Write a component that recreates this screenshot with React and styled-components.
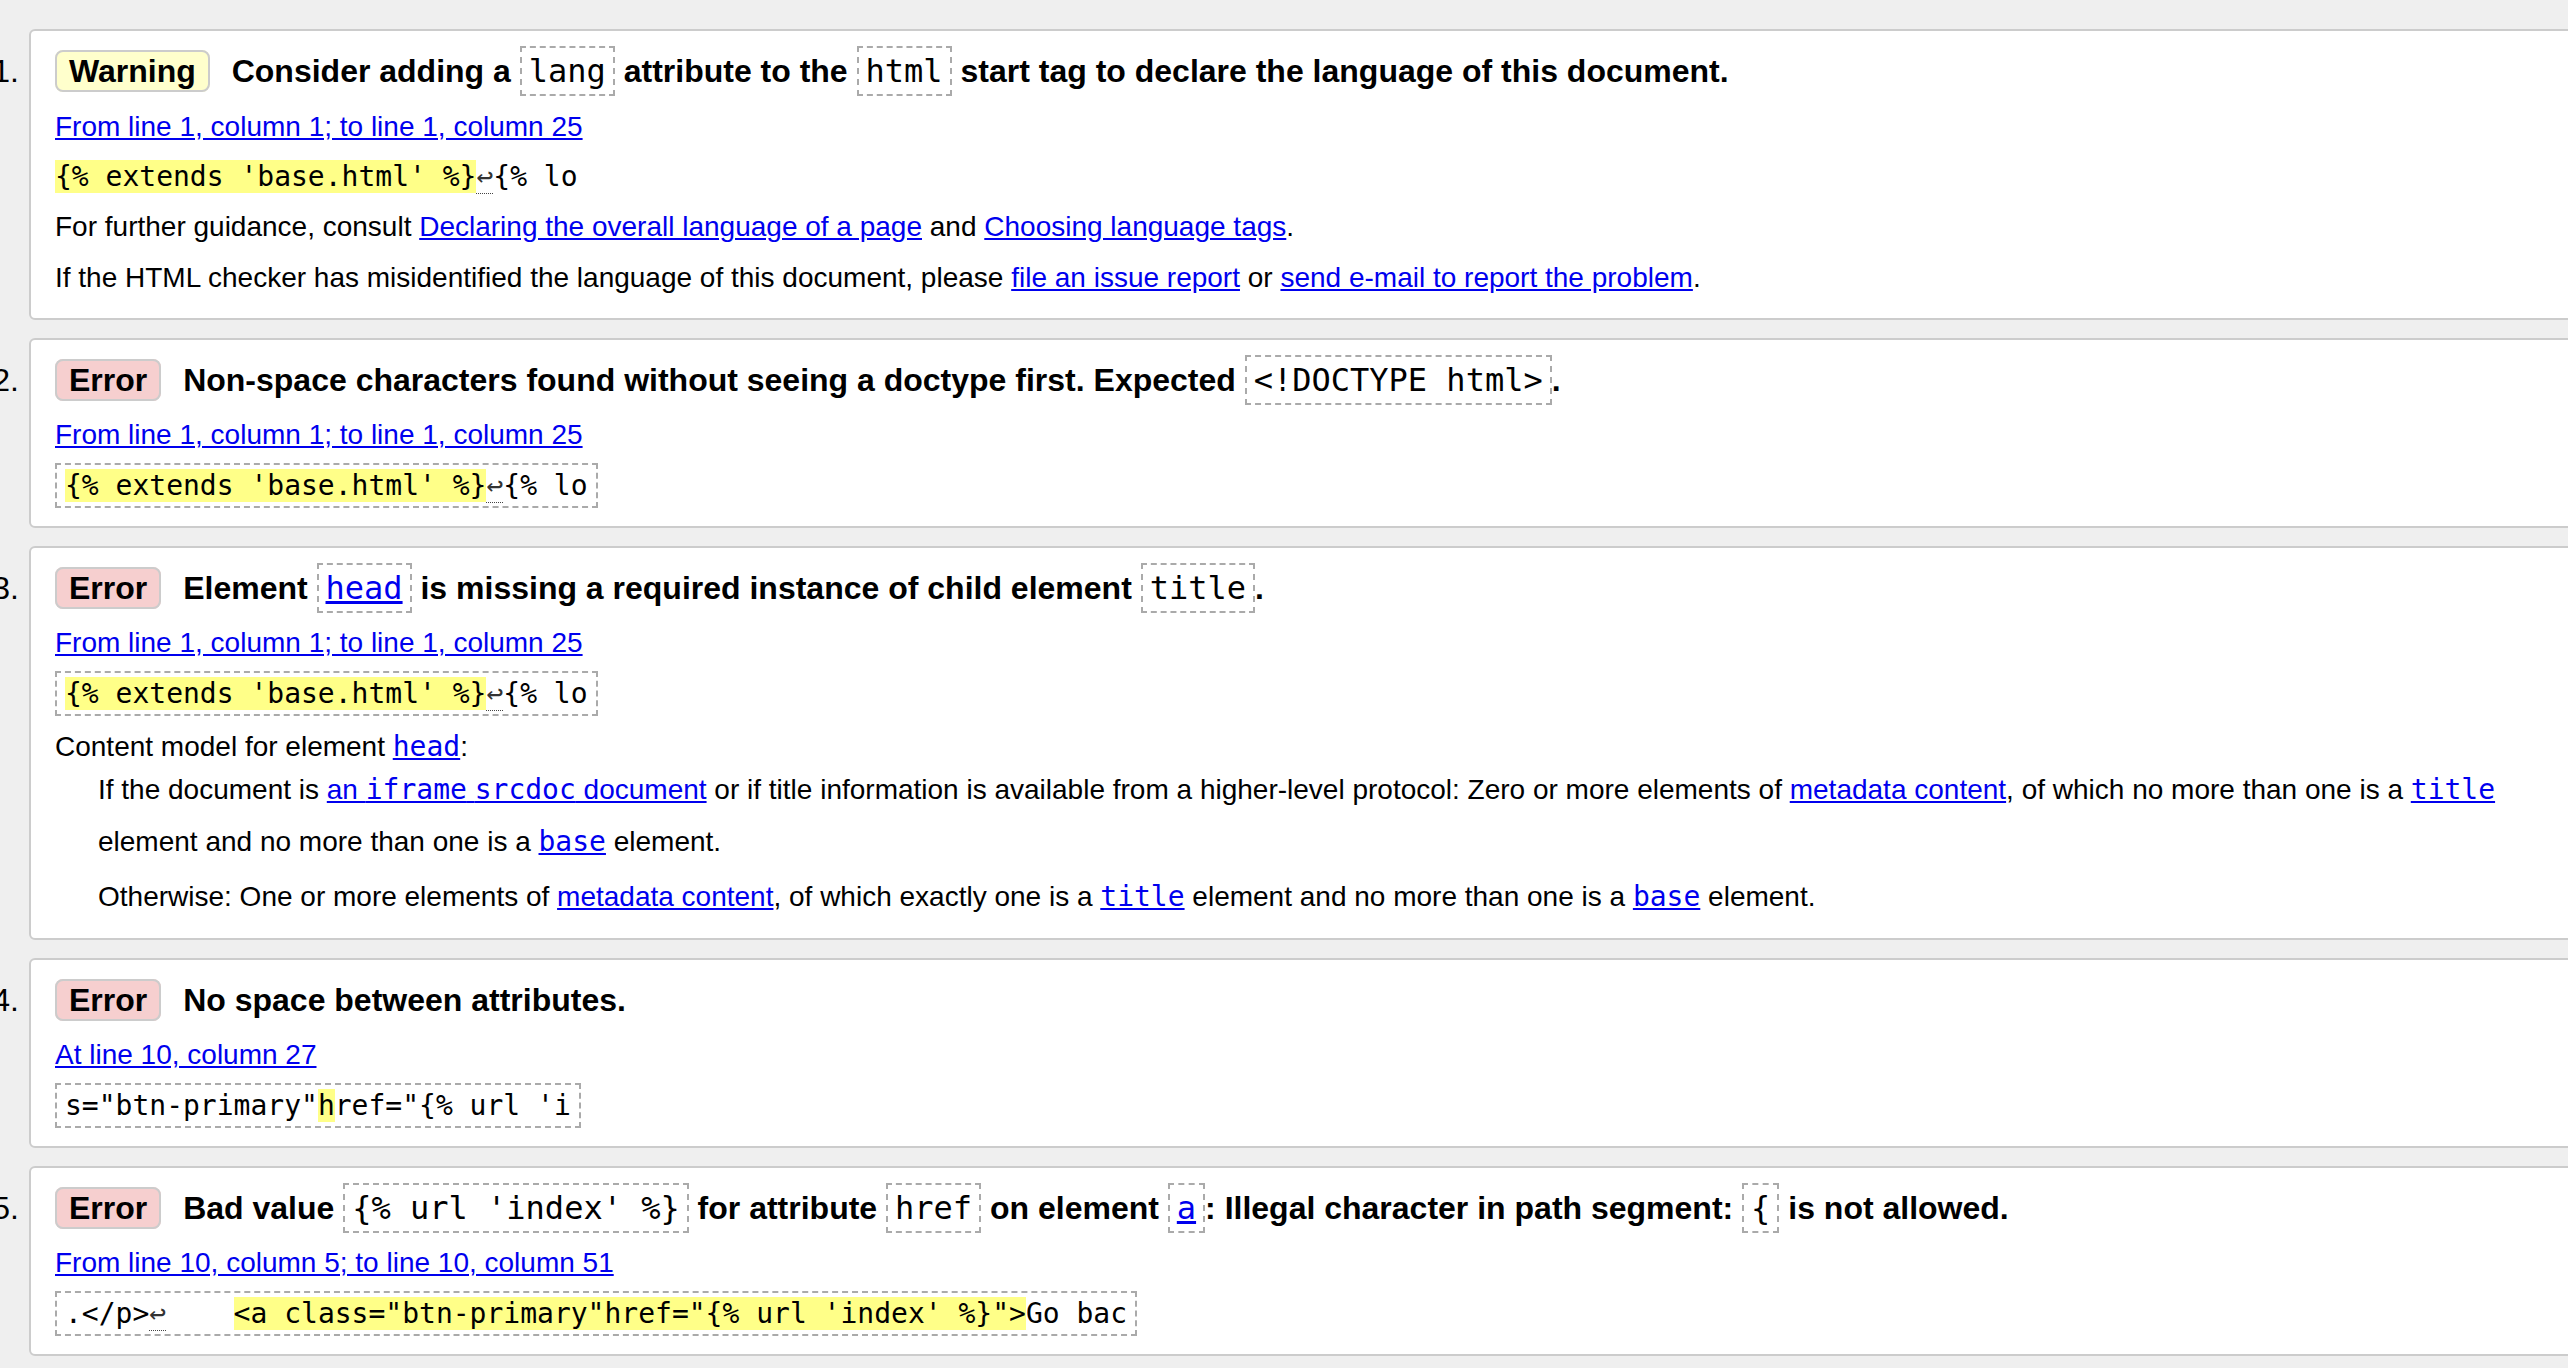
import React from 'react';
import styled, { createGlobalStyle, css } from 'styled-components';

const GlobalStyle = createGlobalStyle`
  html, body {
    margin: 0;
    padding: 0;
    background: #efefef;
    overflow: hidden;
  }

  body {
    font-family: "Liberation Sans", Arial, Helvetica, sans-serif;
    color: #000;
  }
`;

const mono = `"DejaVu Sans Mono", "Liberation Mono", monospace`;

const List = styled.ol`
  list-style: none;
  margin: 0 -27px 0 0;
  padding: 29px 0 0;
  display: flex;
  flex-direction: column;
  gap: 18px;
`;

const Item = styled.li`
  display: flex;
  align-items: baseline;
`;

// the number hangs left of the card and is cut by the window edge
const Num = styled.span`
  flex: 0 0 29px;
  min-width: 0;
  box-sizing: border-box;
  display: flex;
  justify-content: flex-end;
  padding-right: 10px;
  font-size: 32px;
  line-height: 1;
  white-space: nowrap;
`;

const Card = styled.div`
  flex: 1;
  min-width: 0;
  background: #fff;
  border: 2px solid #ccc;
  border-radius: 6px;
  padding: 12px 24px 14.5px;
  font-size: 28px;
  line-height: 1.8;
`;

const Title = styled.p`
  margin: 0;
  font-size: 32px;
  font-weight: bold;
  line-height: 1.8;
`;

const Badge = styled.strong`
  padding: 1px 12px;
  margin-right: 13px;
  border: 2px solid #ccc;
  border-radius: 8px;
  background: ${(p) => (p.$kind === 'warning' ? '#ffffcc' : '#f6cfcf')};
`;

const Para = styled.p`
  margin: ${(p) => p.$top || 0}px 0 0;
`;

const Link = styled.a`
  color: #0000ee;
  text-decoration: underline;
`;

const Tt = styled.code`
  font-family: ${mono};
  font-size: 1em;
`;

const Boxed = styled.code`
  font-family: ${mono};
  font-size: 1em;
  font-weight: normal;
  border: 2px dashed #aaa;
  padding: 4px 7px;
`;

const Extract = styled.code`
  font-family: ${mono};
  font-size: 28px;
  white-space: pre;
  ${(p) =>
    p.$boxed &&
    css`
      border: 2px dashed #aaa;
      padding: 4px 8px;
    `}
`;

const Mark = styled.b`
  font-weight: normal;
  background: #ffff88;
`;

const Lf = styled.span`
  border-bottom: 1px dotted #444;
  color: #333;
`;

const ModelList = styled.dl`
  margin: -8px 0 0;
`;

const ModelItem = styled.dd`
  margin: ${(p) => (p.$first ? 0 : 3)}px 0 0 43px;
  line-height: 52px;
`;

function Message({ n, kind, title, children }) {
  return (
    <Item>
      <Num>{n}.</Num>
      <Card>
        <Title>
          <Badge $kind={kind}>{kind === 'warning' ? 'Warning' : 'Error'}</Badge> {title}
        </Title>
        {children}
      </Card>
    </Item>
  );
}

const BaseExtract = ({ boxed }) => (
  <Extract $boxed={boxed}>
    <Mark>{"{% extends 'base.html' %}"}</Mark>
    <Lf>↩</Lf>
    {'{% lo'}
  </Extract>
);

export default function App() {
  return (
    <>
      <GlobalStyle />
      <List>
        <Message
          n={1}
          kind="warning"
          title={
            <>
              Consider adding a <Boxed>lang</Boxed> attribute to the <Boxed>html</Boxed> start tag to
              declare the language of this document.
            </>
          }
        >
          <Para $top={1}>
            <Link href="#">From line 1, column 1; to line 1, column 25</Link>
          </Para>
          <Para>
            <BaseExtract />
          </Para>
          <Para>
            For further guidance, consult <Link href="#">Declaring the overall language of a page</Link> and{' '}
            <Link href="#">Choosing language tags</Link>.
          </Para>
          <Para>
            If the HTML checker has misidentified the language of this document, please{' '}
            <Link href="#">file an issue report</Link> or <Link href="#">send e-mail to report the problem</Link>.
          </Para>
        </Message>

        <Message
          n={2}
          kind="error"
          title={
            <>
              Non-space characters found without seeing a doctype first. Expected <Boxed>{'<!DOCTYPE html>'}</Boxed>.
            </>
          }
        >
          <Para $top={1}>
            <Link href="#">From line 1, column 1; to line 1, column 25</Link>
          </Para>
          <Para>
            <BaseExtract boxed />
          </Para>
        </Message>

        <Message
          n={3}
          kind="error"
          title={
            <>
              Element{' '}
              <Boxed>
                <Link href="#">head</Link>
              </Boxed>{' '}
              is missing a required instance of child element <Boxed>title</Boxed>.
            </>
          }
        >
          <Para $top={1}>
            <Link href="#">From line 1, column 1; to line 1, column 25</Link>
          </Para>
          <Para>
            <BaseExtract boxed />
          </Para>
          <Para $top={3}>
            Content model for element{' '}
            <Link href="#">
              <Tt>head</Tt>
            </Link>
            :
          </Para>
          <ModelList>
            <ModelItem $first>
              If the document is{' '}
              <Link href="#">
                an <Tt>iframe</Tt> <Tt>srcdoc</Tt> document
              </Link>{' '}
              or if title information is available from a higher-level protocol: Zero or more elements of{' '}
              <Link href="#">metadata content</Link>, of which no more than one is a{' '}
              <Link href="#">
                <Tt>title</Tt>
              </Link>{' '}
              element and no more than one is a{' '}
              <Link href="#">
                <Tt>base</Tt>
              </Link>{' '}
              element.
            </ModelItem>
            <ModelItem>
              Otherwise: One or more elements of <Link href="#">metadata content</Link>, of which exactly one is a{' '}
              <Link href="#">
                <Tt>title</Tt>
              </Link>{' '}
              element and no more than one is a{' '}
              <Link href="#">
                <Tt>base</Tt>
              </Link>{' '}
              element.
            </ModelItem>
          </ModelList>
        </Message>

        <Message n={4} kind="error" title="No space between attributes.">
          <Para $top={1}>
            <Link href="#">At line 10, column 27</Link>
          </Para>
          <Para>
            <Extract $boxed>
              {'s="btn-primary"'}
              <Mark>h</Mark>
              {`ref="{% url 'i`}
            </Extract>
          </Para>
        </Message>

        <Message
          n={5}
          kind="error"
          title={
            <>
              Bad value <Boxed>{"{% url 'index' %}"}</Boxed> for attribute <Boxed>href</Boxed> on element{' '}
              <Boxed>
                <Link href="#">a</Link>
              </Boxed>
              : Illegal character in path segment: <Boxed>{'{'}</Boxed> is not allowed.
            </>
          }
        >
          <Para $top={1}>
            <Link href="#">From line 10, column 5; to line 10, column 51</Link>
          </Para>
          <Para>
            <Extract $boxed>
              {'.</p>'}
              <Lf>↩</Lf>
              {'    '}
              <Mark>{`<a class="btn-primary"href="{% url 'index' %}">`}</Mark>
              {'Go bac'}
            </Extract>
          </Para>
        </Message>
      </List>
    </>
  );
}
